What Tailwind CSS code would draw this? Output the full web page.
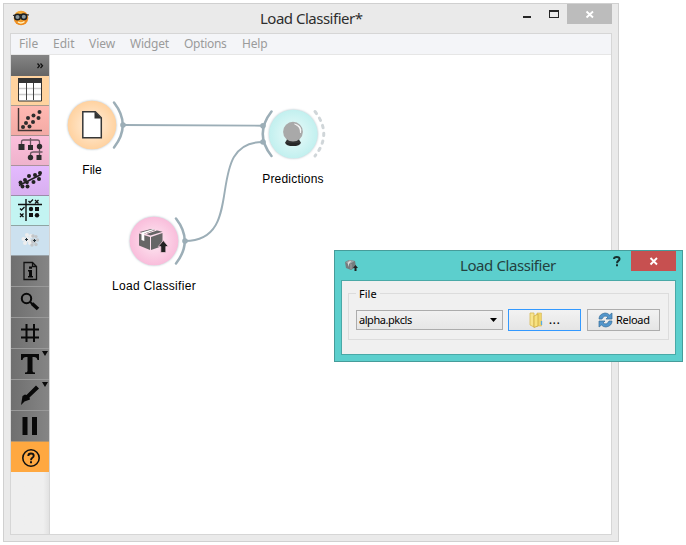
<!DOCTYPE html>
<html lang="en">
<head>
<meta charset="utf-8">
<title>Load Classifier</title>
<script src="https://cdn.jsdelivr.net/npm/@tailwindcss/browser@4"></script>
</head>
<body class="relative h-[545px] w-[686px] overflow-hidden bg-white font-['Noto_Sans',sans-serif]">
<main class="pt-[3px] pl-[3px]">
<section class="flex h-[539px] w-[616px] flex-col border border-[#d0d0d0] bg-[#eaeaea] px-[6px] pb-[6px]">
  <header class="flex h-[29px] shrink-0 items-start">
    <svg class="mt-[6px] ml-[2px] h-4 w-[18px] shrink-0" viewBox="0 0 18 16">
      <defs><radialGradient id="face" cx=".4" cy=".35"><stop offset="0" stop-color="#ffc94d"/><stop offset="1" stop-color="#ee8c1e"/></radialGradient></defs>
      <circle cx="9" cy="8" r="7.300" fill="url(#face)"/>
      <path d="M1 5.500Q9 3.500 17 5" stroke="#26282a" stroke-width="1.200" fill="none"/>
      <circle cx="5.500" cy="7" r="2.800" fill="#8b9aa0" stroke="#1d2022" stroke-width="1.500"/>
      <circle cx="11.800" cy="6.800" r="2.800" fill="#8b9aa0" stroke="#1d2022" stroke-width="1.500"/>
      <path d="M6 12Q9 14 12.500 11.500" stroke="#fff3c0" stroke-width="1.500" fill="none"/>
    </svg>
    <h1 class="mt-[3px] w-[560px] shrink-0 pl-[230px] text-[15px] leading-[22px] text-[#2e2e2e] tracking-[-0.5px] whitespace-nowrap -mr-[88px]">Load Classifier*</h1>
    <svg class="ml-auto h-5 w-[90px] shrink-0" viewBox="522 4 90 20" shape-rendering="crispEdges">
      <path d="M523 16h8v2h-8z" fill="#252525"/>
      <path d="M549 10h10v8h-10zM550 12v5h8v-5z" fill="#252525" fill-rule="evenodd"/>
      <path d="M567 4h45v20h-45z" fill="#bcbcbc"/>
      <path d="M586.500 11.500l6.500 6M593 11.500l-6.500 6" stroke="#fff" stroke-width="1.900" shape-rendering="auto"/>
    </svg>
  </header>
  <div class="flex min-h-0 w-[602px] flex-1 flex-col border border-[#d6d6d6] bg-white">
    <nav class="flex h-[21px] shrink-0 items-center border-b border-[#e6e6e6] bg-[#f4f5f8] pl-2 text-[12px] leading-5 text-[#9b9b9b]">
      <span class="w-[34px]">File</span><span class="w-9">Edit</span><span class="w-[41px]">View</span><span class="w-[54px] tracking-[-0.2px]">Widget</span><span class="w-[58px] tracking-[-0.3px]">Options</span><span class="tracking-[-0.2px]">Help</span>
    </nav>
    <div class="flex min-h-0 flex-1">
      <aside class="flex w-[39px] shrink-0 flex-col border-r border-[#d6d6d6] bg-linear-to-r from-[#efefef] from-85% to-[#e2e2e2]">
        <div class="h-[21px] bg-linear-to-b from-[#858585] to-[#656565]">
          <svg width="38" height="21" viewBox="0 0 38 21" fill="none" stroke="#111" stroke-width="1.300"><path d="M26.500 8.500l2 2.300-2 2.300M29.500 8.500l2 2.300-2 2.300"/></svg>
        </div>
        <div class="h-[30px] border-b border-[#aa9b8c] bg-[#ffd39f]">
          <svg width="38" height="29" viewBox="0 0 38 29"><path d="M7.500 2.500h23v22.500h-23z" fill="#fff" stroke="#333"/><path d="M8 12.500h22M8 18.500h22" stroke="#ccc" stroke-width="1.500"/><path d="M15.500 6v18M22.500 6v18" stroke="#444"/><path d="M7 2h24v5H7z" fill="#333"/></svg>
        </div>
        <div class="h-[30px] border-b border-[#a98f8f] bg-linear-to-b from-[#ffb9b2] to-[#f3aaa5]">
          <svg width="38" height="29" viewBox="0 0 38 29" fill="#2d2d2d"><path d="M7.500 2v22.500H31" fill="none" stroke="#443535" stroke-width="1.400"/><circle cx="12" cy="21" r="2"/><circle cx="15" cy="17" r="2"/><circle cx="18.500" cy="20.500" r="2"/><circle cx="17" cy="12" r="2"/><circle cx="22" cy="16" r="2"/><circle cx="22.500" cy="9.500" r="2"/><circle cx="27.500" cy="12" r="2"/><circle cx="28.500" cy="6" r="2"/></svg>
        </div>
        <div class="h-[30px] border-b border-[#aa929c] bg-linear-to-b from-[#fbc0dc] to-[#efb2cc]">
          <svg width="38" height="29" viewBox="0 0 38 29" fill="#2d2d2d"><path d="M19.500 2v9M10.500 9V6q0-2 2-2h14q2 0 2 2v17M19.500 20v-2q0-2 3-2h9" fill="none" stroke="#6d5863" stroke-width="1.300"/><path d="M7.500 8h6v6h-6zM17 9h5v5h-5zM25.500 19h5v5h-5z"/><circle cx="28.500" cy="10.500" r="2.700"/><circle cx="19.500" cy="21.500" r="2.700"/></svg>
        </div>
        <div class="h-[30px] border-b border-[#9b8caa] bg-linear-to-b from-[#e4baff] to-[#d8afef]">
          <svg width="38" height="29" viewBox="0 0 38 29" fill="#222"><path d="M8 19.500L30 8.500" stroke="#222" stroke-width="1.700"/><circle cx="9.500" cy="16.500" r="2"/><circle cx="11.500" cy="20.500" r="2"/><circle cx="16.500" cy="20.500" r="2"/><circle cx="14" cy="14" r="2"/><circle cx="18" cy="10" r="2"/><circle cx="22.500" cy="16" r="2"/><circle cx="24" cy="9" r="2"/><circle cx="29" cy="7" r="2"/><circle cx="28" cy="13" r="2"/><circle cx="16" cy="16.500" r="1.800"/></svg>
        </div>
        <div class="h-[30px] border-b border-[#8fa5a3] bg-[#c3f4f2]">
          <svg width="38" height="29" viewBox="0 0 38 29" fill="#111"><path d="M7 8.500h24M15 3v22" stroke="#111" stroke-width="1.400"/><path d="M17.500 5l1.500 1.500L22 3.500M9 12.500l1.500 1.500 3-3M24 4l3.500 3.500M27.500 4L24 7.500M9 17.500l3.500 3.500M12.500 17.500L9 21" stroke="#111" stroke-width="1.300" fill="none"/><path d="M24 11h4v4h-4zM18 17h4v4h-4z"/><circle cx="20" cy="13" r="2.200"/><circle cx="26" cy="19.300" r="2.200"/></svg>
        </div>
        <div class="h-[30px] border-b border-[#9aa3a9] bg-[#cce1ef]">
          <svg width="38" height="29" viewBox="0 0 38 29"><g fill="#eee"><circle cx="16" cy="9" r="2"/><circle cx="20" cy="10" r="2"/><circle cx="12.500" cy="13" r="2"/><circle cx="17" cy="13.500" r="2.500"/><circle cx="14" cy="17" r="2"/><circle cx="19" cy="17" r="2"/></g><g fill="#c3c5c7"><circle cx="22" cy="10" r="1.800"/><circle cx="25" cy="10.500" r="1.600"/><circle cx="26.500" cy="14" r="1.700"/><circle cx="22.500" cy="15" r="2.500"/><circle cx="21" cy="19" r="1.700"/><circle cx="25" cy="18.500" r="1.700"/></g><path d="M14 13.500h3M15.500 12v3M22 14.500h3M23.500 13v3" stroke="#26343d"/></svg>
        </div>
        <div class="h-[31px] border-b border-[#999] bg-linear-to-r from-[#6f6f6f] to-[#858585]">
          <svg width="38" height="30" viewBox="0 0 38 30"><path d="M13 6.500h8.500l4 4V23.500H13zM21.500 6.500v4h4" fill="none" stroke="#111" stroke-width="1.300"/><path d="M18 10.500h3v2.300h-3zM17 14h4v6h1v1.500h-5V20h1v-4.500h-1z" fill="#090909"/></svg>
        </div>
        <div class="h-[31px] border-b border-[#999] bg-linear-to-r from-[#6f6f6f] to-[#858585]">
          <svg width="38" height="30" viewBox="0 0 38 30" fill="none" stroke="#090909"><circle cx="15.500" cy="11.500" r="4.700" stroke-width="2"/><path d="M19 15l2.500 2" stroke-width="2"/><path d="M21 16.500l6 5.500" stroke-width="3.700"/></svg>
        </div>
        <div class="h-[31px] border-b border-[#999] bg-linear-to-r from-[#6f6f6f] to-[#858585]">
          <svg width="38" height="30" viewBox="0 0 38 30" fill="none" stroke="#090909" stroke-width="2"><path d="M15.500 6v18M23 6v18M10 11.500h18M10 19.500h18"/></svg>
        </div>
        <div class="h-[31px] border-b border-[#999] bg-linear-to-r from-[#6f6f6f] to-[#858585]">
          <svg width="38" height="30" viewBox="0 0 38 30" fill="#090909"><path d="M10 5h18v6h-1.500q-.5-3-3.500-3h-1.500v14q0 1.500 2.500 1.500V25H14v-1.500q2.500 0 2.500-1.500V8H15q-3 0-3.500 3H10zM31 2h6l-3 5z"/></svg>
        </div>
        <div class="h-[31px] border-b border-[#999] bg-linear-to-r from-[#6f6f6f] to-[#858585]">
          <svg width="38" height="30" viewBox="0 0 38 30" fill="#090909"><path d="M25 5.500L28 8.500 18.500 17.500l.5 2-5.500 2L10 25l1.500-9 2.500-1.500 1.500.5zM31 2h6l-3 5z"/></svg>
        </div>
        <div class="h-[31px] border-b border-[#b5946a] bg-linear-to-r from-[#6f6f6f] to-[#858585]">
          <svg width="38" height="30" viewBox="0 0 38 30" fill="#090909"><path d="M11.500 6h5v18h-5zM21 6h5v18h-5z"/></svg>
        </div>
        <div class="h-[30px] bg-[#ffa840]">
          <svg width="38" height="30" viewBox="0 0 38 30" fill="none" stroke="#111"><circle cx="20" cy="16" r="8.200" stroke-width="1.600"/><path d="M17.300 14q0-2.500 2.700-2.500t2.700 2.200q0 1.200-1.300 2T20 18.200" stroke-width="1.900"/><path d="M20 19.300v2" stroke-width="2"/></svg>
        </div>
      </aside>
      <div class="relative flex-1 overflow-hidden font-['Liberation_Sans',Arial,sans-serif] text-[12px] leading-[14px] text-black">
        <svg width="561" height="479" viewBox="50 55 561 479">
          <defs>
            <radialGradient id="orange"><stop offset="0" stop-color="#fff0df"/><stop offset="1" stop-color="#ffd2a0"/></radialGradient>
            <radialGradient id="cyan"><stop offset="0" stop-color="#ecfbfa"/><stop offset="1" stop-color="#c2f0ef"/></radialGradient>
            <radialGradient id="pink"><stop offset="0" stop-color="#feeaf3"/><stop offset="1" stop-color="#f9bddb"/></radialGradient>
            <filter id="glow" x="-20%" y="-20%" width="140%" height="140%"><feDropShadow dx="0" dy="0" stdDeviation="1.300" flood-color="#829ba8" flood-opacity=".7"/></filter>
          </defs>
          <g fill="none" stroke="#9caeb7" stroke-width="1.900">
            <path d="M123 125L263 125.700M185 241C249 241 201 142 263 142"/>
            <g stroke-width="2.500" stroke-linecap="round"><path d="M114 102.500Q131.500 125 114 147.500"/><path d="M176 218.500Q193.500 241 176 263.500"/><path d="M271.500 111.500Q254 134 271.500 156"/></g>
            <path d="M315 111.500Q332.500 134 315 156" stroke="#d0d6d9" stroke-width="3" stroke-dasharray="2.500 5.400" stroke-linecap="round"/>
          </g>
          <g fill="#9caeb7"><circle cx="123" cy="125" r="2.800"/><circle cx="185" cy="241" r="2.800"/><circle cx="263" cy="125.700" r="2.800"/><circle cx="263" cy="142" r="2.800"/></g>
          <g filter="url(#glow)"><circle cx="92" cy="125" r="24.300" fill="url(#orange)"/><circle cx="293.300" cy="134" r="24.300" fill="url(#cyan)"/><circle cx="154" cy="241" r="24.300" fill="url(#pink)"/></g>
          <path d="M82.800 111.800h12.500l6 6v20h-18.500z" fill="#fff" stroke="#373737" stroke-width="1.500"/><path d="M94.500 111.500v7h7z" fill="#333"/>
          <ellipse cx="293" cy="142.800" rx="7.800" ry="3.300" fill="#282828"/><path d="M287 139h12l1.500 4h-15z" fill="#333"/>
          <circle cx="293" cy="131.700" r="9.900" fill="#a9a9a9"/><path d="M294.500 124Q300.500 126.500 300.500 133Q302.500 125.500 294.500 124z" fill="#fff" stroke="#fff" stroke-width=".6"/>
          <path d="M139 233.500l11 3.500v13l-11-4.500z" fill="#666"/><path d="M151 237l11.500-4v13l-11.500 4z" fill="#666"/><path d="M139.500 232l11.500-3 11.500 2.800-12 3.800z" fill="#666"/><path d="M141.500 232.500l11-3.200 2 .5-10.200 3.700v7.500l-2.800-1z" fill="#fff"/><path d="M145 234l11.500-3.800" stroke="#fde1ec"/>
          <path d="M163.300 240.500l5 6h-2.500v6h-5v-6h-2.500z" fill="#222" stroke="#fbd0e3" stroke-width=".7"/>
        </svg>
        <span class="absolute top-[108px] left-[2px] w-20 text-center">File</span>
        <span class="absolute top-[117px] left-[203px] w-20 text-center tracking-[0.2px]">Predictions</span>
        <span class="absolute top-[224px] left-[54px] w-[100px] text-center tracking-[0.3px]">Load Classifier</span>
      </div>
    </div>
  </div>
</section>
</main>
<section class="absolute top-[250px] left-[334px] flex h-[112px] w-[349px] flex-col border border-[#469c9a] bg-[#5ccfcd] px-[6px] pb-[6px]">
  <header class="flex h-[29px] shrink-0">
    <svg class="mt-[7px] ml-[3px] h-4 w-4 shrink-0" viewBox="0 0 16 16"><path d="M1 4l4-2 6 1 1 6-5 3-5-2z" fill="#767c7e"/><path d="M1.500 4.500l4-2.500 5 1-4 2.500z" fill="#9da4a5"/><path d="M3.500 5L6 3l1 .5L5 6v3z" fill="#ddd"/><path d="M7 6v5" stroke="#a0a0a0"/><path d="M11.500 7l2.500 3h-1.500v3h-2v-3H9z" fill="#222"/></svg>
    <h2 class="mt-[3px] w-[240px] shrink-0 pl-[100px] text-[15px] leading-[22px] text-[#24413f] tracking-[-0.42px] whitespace-nowrap">Load Classifier</h2>
    <svg class="ml-auto h-5 w-[67px] shrink-0" viewBox="609 251 67 20">
      <path d="M614 259q0-2 2.800-2 2.700 0 2.700 2 0 1-1.200 1.900T617 263.300M617 264.300v2" fill="none" stroke="#183130" stroke-width="2"/>
      <path d="M631 251h45v20h-45z" fill="#c75050"/><path d="M650.500 258l6.500 6.500M657 258l-6.500 6.500" stroke="#fff" stroke-width="1.900"/>
    </svg>
  </header>
  <div class="w-[335px] flex-1 border border-[#49a9a7] bg-[#f0f0f0] px-[6px] pt-[12px] text-[11px] text-black">
    <div class="relative flex h-[47px] w-[321px] gap-[5px] border border-[#dcdcdc] pt-[16px] pl-[7px]">
      <span class="absolute -top-[8px] left-[7px] bg-[#f0f0f0] px-[3px] leading-4">File</span>
      <div class="flex h-5 w-[147px] items-center justify-between border border-[#acacac] bg-linear-to-b from-[#f1f1f1] to-[#e6e6e6] pr-[5px] pl-[2px]"><span class="tracking-[-0.45px]">alpha.pkcls</span><svg width="7" height="4"><path d="M0 0h7L3.500 4z"/></svg></div>
      <button class="-mt-px flex h-[22px] w-[73px] items-center justify-center gap-[6px] border border-[#3399ff] bg-linear-to-b from-[#f2f2f2] to-[#e5e5e5]">
        <svg width="14" height="16" viewBox="0 0 14 16"><path d="M1 1h4v14l-4-2z" fill="#f8e58e" stroke="#d7b955" stroke-width=".8"/><path d="M8 1h4.500v13H7z" fill="#f1d66b" stroke="#d3b75e" stroke-width=".6"/><path d="M5 4l4-2v12l-4 1.500z" fill="#f7e27e" stroke="#cdaa43" stroke-width=".8"/><path d="M12.500 9v4" stroke="#5aabdf" stroke-width="1.300"/></svg>
        <span class="text-[13px] tracking-[0.4px]">...</span>
      </button>
      <button class="-mt-px ml-[1px] flex h-[22px] w-[73px] items-center gap-[3px] border border-[#adadad] bg-linear-to-b from-[#f2f2f2] to-[#e5e5e5] pl-[10px]">
        <svg width="15" height="16" viewBox="0 0 15 16"><path d="M1 7Q1 2 7 1q3 0 4.500 2L14 1v6H8l2-2Q6 2.500 4 7z" fill="#5296cc" stroke="#376d99" stroke-width=".7"/><path d="M14 9q0 5-6 6-3 0-4.500-2L1 15V9h6l-2 2q4 2.500 6-2z" fill="#5296cc" stroke="#376d99" stroke-width=".7"/></svg>
        <span class="tracking-[-0.3px]">Reload</span>
      </button>
    </div>
  </div>
</section>
</body>
</html>
